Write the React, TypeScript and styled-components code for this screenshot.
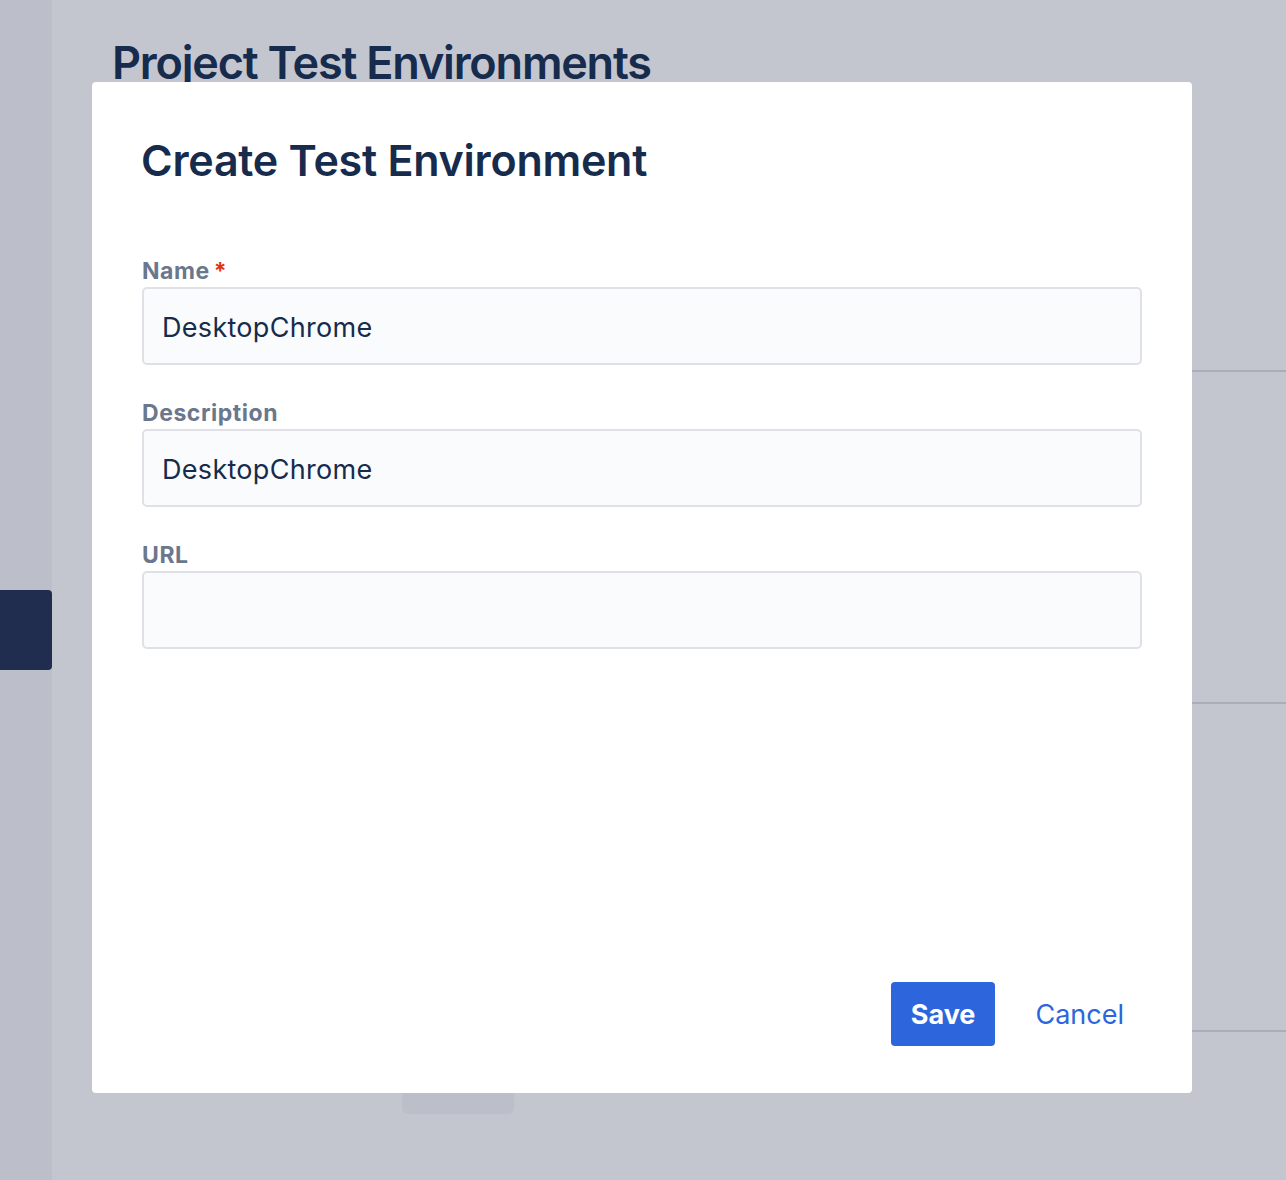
import React from 'react'
import styled, { createGlobalStyle } from 'styled-components'

const Colors = {
  Backdrop: '#c4c6cf',
  Sidebar: '#bcbeca',
  SidebarActive: '#212d4f',
  Rule: '#abadba',
  Ghost: '#bcbec9',
  Text: '#172b4d',
  Label: '#6b778c',
  Required: '#de350b',
  Field: '#fafbfc',
  FieldBorder: '#dfe1e6',
  Primary: '#2d65dc',
  White: '#ffffff'
}

const GlobalStyle = createGlobalStyle`
  html, body {
    margin: 0;
    padding: 0;
    background: ${Colors.Backdrop};
    font-family: Inter, "Noto Sans", "Liberation Sans", sans-serif;
    color: ${Colors.Text};
  }
  * { box-sizing: border-box; }
`

const Page = styled.div`
  position: relative;
  display: flex;
  width: 1286px;
  height: 1180px;
  overflow: hidden;
  background: ${Colors.Backdrop};
`

const Sidebar = styled.nav`
  width: 52px;
  flex-shrink: 0;
  background: ${Colors.Sidebar};
  padding-top: 590px;
`

const NavItem = styled.div`
  height: 80px;
  background: ${Colors.SidebarActive};
  border-radius: 0 4px 4px 0;
`

const Main = styled.main`
  flex: 1;
  padding: 36px 0 0 60px;
  display: flex;
  flex-direction: column;
`

const PageTitle = styled.h1`
  margin: 0;
  font-size: 45px;
  line-height: 54px;
  font-weight: 600;
  letter-spacing: -1.2px;
  color: ${Colors.Text};
`

type RowProps = { height: number }

const TableRow = styled.div<RowProps>`
  height: ${({ height }) => height}px;
  border-bottom: 2px solid ${Colors.Rule};
`

const GhostBar = styled.div`
  margin: 46px 0 0 290px;
  width: 112px;
  height: 36px;
  border-radius: 6px;
  background: ${Colors.Ghost};
`

const Modal = styled.div`
  position: absolute;
  top: 82px;
  left: 92px;
  width: 1100px;
  height: 1011px;
  background: ${Colors.White};
  border-radius: 4px;
  padding: 54px 50px 47px;
  display: flex;
  flex-direction: column;
`

const ModalTitle = styled.h2`
  margin: 0 0 0 -1px;
  font-size: 43px;
  line-height: 48px;
  font-weight: 600;
  letter-spacing: -0.25px;
  color: ${Colors.Text};
`

const Form = styled.form`
  display: flex;
  flex-direction: column;
  gap: 34px;
  margin-top: 73px;
`

const Field = styled.div`
  display: flex;
  flex-direction: column;
`

const Label = styled.label`
  font-size: 23px;
  line-height: 28px;
  font-weight: 700;
  letter-spacing: 0.55px;
  color: ${Colors.Label};
  margin-bottom: 2px;
`

const Asterisk = styled.span`
  color: ${Colors.Required};
  margin-left: 4px;
`

const Input = styled.input`
  width: 1000px;
  height: 78px;
  border: 2px solid ${Colors.FieldBorder};
  border-radius: 5px;
  background: ${Colors.Field};
  padding: 2px 18px 0;
  font-family: inherit;
  font-size: 27px;
  letter-spacing: 0.3px;
  color: ${Colors.Text};
  outline: none;
`

const Footer = styled.div`
  margin-top: auto;
  display: flex;
  justify-content: flex-end;
  gap: 20px;
  margin-right: -2px;
`

type ButtonProps = { primary?: boolean }

const Button = styled.button<ButtonProps>`
  height: 64px;
  padding: 0 20px;
  border: none;
  border-radius: 4px;
  font-family: inherit;
  font-size: 27px;
  font-weight: ${({ primary }) => (primary ? 700 : 400)};
  background: ${({ primary }) => (primary ? Colors.Primary : 'transparent')};
  color: ${({ primary }) => (primary ? Colors.White : Colors.Primary)};
  cursor: pointer;
`

const App = () => (
  <>
    <GlobalStyle />
    <Page>
      <Sidebar>
        <NavItem />
      </Sidebar>
      <Main>
        <PageTitle>Project Test Environments</PageTitle>
        <TableRow height={282} />
        <TableRow height={332} />
        <TableRow height={328} />
        <GhostBar />
      </Main>
      <Modal role="dialog">
        <ModalTitle>Create Test Environment</ModalTitle>
        <Form>
          <Field>
            <Label>
              Name<Asterisk>*</Asterisk>
            </Label>
            <Input defaultValue="DesktopChrome" />
          </Field>
          <Field>
            <Label>Description</Label>
            <Input defaultValue="DesktopChrome" />
          </Field>
          <Field>
            <Label>URL</Label>
            <Input defaultValue="" />
          </Field>
        </Form>
        <Footer>
          <Button primary>Save</Button>
          <Button>Cancel</Button>
        </Footer>
      </Modal>
    </Page>
  </>
)

export default App
